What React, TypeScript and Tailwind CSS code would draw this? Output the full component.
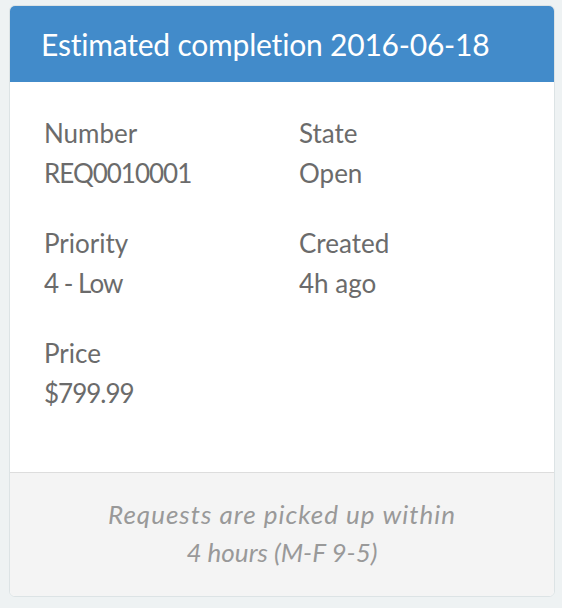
import React from 'react';

type Field = { label: string; value: string; tight?: boolean };

const fields: Field[][] = [
  [
    { label: 'Number', value: 'REQ0010001', tight: true },
    { label: 'State', value: 'Open' },
  ],
  [
    { label: 'Priority', value: '4 - Low', tight: true },
    { label: 'Created', value: '4h ago' },
  ],
  [{ label: 'Price', value: '$799.99', tight: true }],
];

export default function App() {
  return (
    <div
      className="w-[562px] h-[608px] bg-[#eef2f3] pt-[5px] pl-[9px]"
      style={{ fontFamily: 'Lato, "Open Sans", sans-serif' }}
    >
      <div className="w-[546px] rounded-[6px] border border-[#dce3e5] overflow-hidden bg-white">
        {/* Header */}
        <div className="h-[76px] bg-[#428bca] flex items-center pl-[31px] pb-[1px]">
          <h2 className="text-[30px] leading-none text-white tracking-[-0.2px]">
            Estimated completion 2016-06-18
          </h2>
        </div>

        {/* Details */}
        <div className="h-[390px] pt-[31px] pl-[34px] flex flex-col gap-[30px] text-[26px] leading-[40px] text-[#6b6b6b]">
          {fields.map((row, i) => (
            <div key={i} className="flex">
              {row.map((f) => (
                <div key={f.label} className="w-[256px]">
                  <div>{f.label}</div>
                  <div className={f.tight ? 'tracking-[-1px]' : ''}>{f.value}</div>
                </div>
              ))}
            </div>
          ))}
        </div>

        {/* Footer */}
        <div className="border-t border-[#dddddd] bg-[#f4f4f4] pt-[22px] pb-[25px] text-center italic text-[26px] leading-[38px] text-[#999999]">
          <div className="tracking-[1px]">Requests are picked up within</div>
          <div>4 hours (M-F 9-5)</div>
        </div>
      </div>
    </div>
  );
}
